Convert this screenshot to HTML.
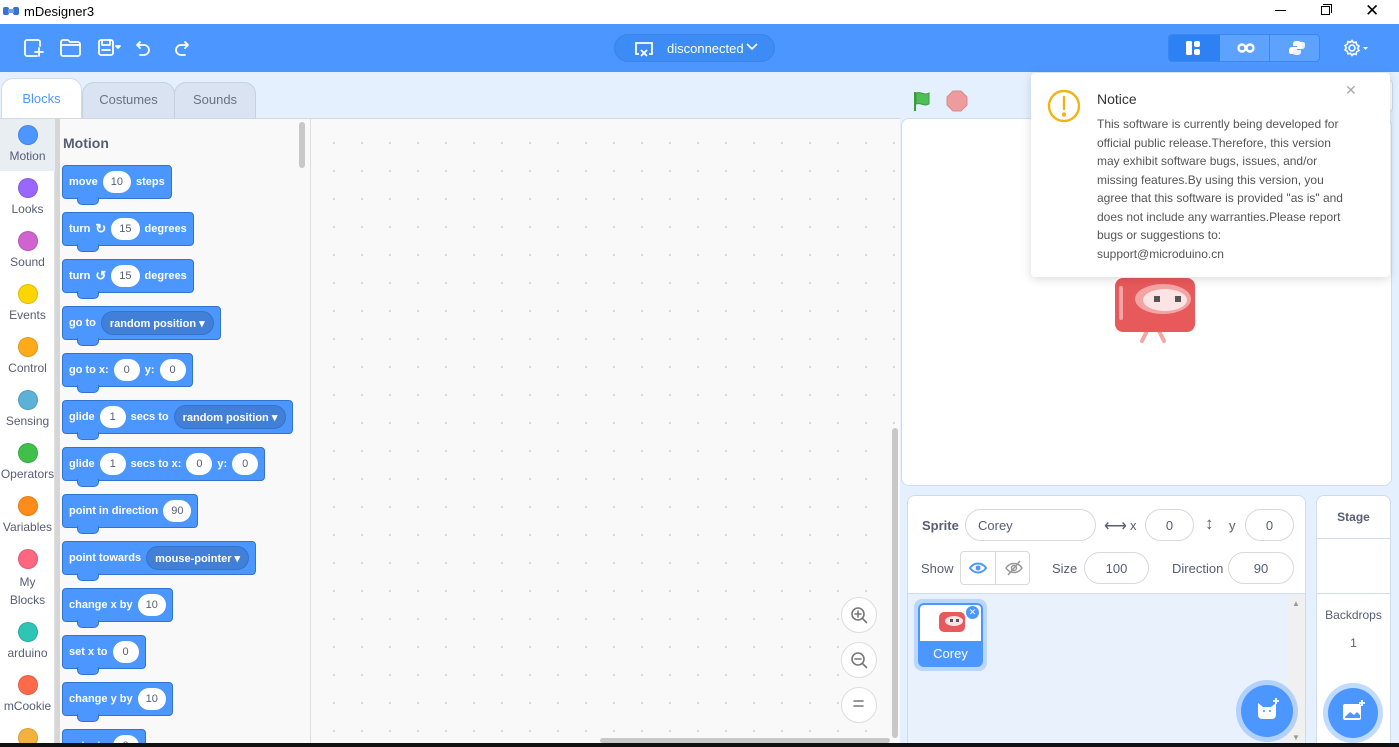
<!DOCTYPE html>
<html><head><meta charset="utf-8"><style>
*{box-sizing:border-box;margin:0;padding:0}
html{width:1399px;height:747px;overflow:hidden}
body{width:1399px;height:747px;overflow:hidden;background:#e5f0ff;font-family:"Liberation Sans",Arial,sans-serif;position:relative}
.a{position:absolute}
.blk{position:absolute;left:62px;height:34px;background:#4c97ff;border:1px solid #3373cc;border-radius:4px;color:#fff;font-size:11px;font-weight:bold;display:flex;align-items:center;padding:0 6px;gap:5px;white-space:nowrap}
.blk:after{content:"";position:absolute;left:14px;bottom:-7px;width:20px;height:7px;background:#4c97ff;border:1px solid #3373cc;border-top:none;border-radius:0 0 5px 5px}
.in{background:#fff;color:#575e75;border-radius:12px;height:22px;min-width:26px;padding:0 8px;display:inline-flex;align-items:center;justify-content:center;font-weight:normal}
.dd{background:#4280d7;border:1px solid #3373cc;border-radius:12px;height:24px;padding:0 8px;display:inline-flex;align-items:center;font-size:11px}
.cat{position:absolute;left:0;width:55px;text-align:center;font-size:12px;color:#575e75}
.cat i{display:block;width:20px;height:20px;border-radius:50%;margin:0 auto 4px;border:1px solid rgba(0,0,0,.12)}
.fld{position:absolute;height:32px;border:1px solid #d9d9d9;border-radius:16px;background:#fff;font-size:13px;color:#575e75;display:flex;align-items:center;justify-content:center}
.lbl{position:absolute;font-size:13px;color:#575e75}
</style></head><body>
<div class="a" style="left:0;top:0;width:1399px;height:24px;background:#fff"></div>
<svg class="a" style="left:3px;top:5px" width="16" height="12"><rect x="0" y="2" width="6" height="8" rx="2" fill="#3b6fd4"/><rect x="10" y="2" width="6" height="8" rx="2" fill="#3b6fd4"/><rect x="5" y="4" width="6" height="4" fill="#6a9ef0"/></svg>
<div class="a" style="left:24px;top:4px;font-size:13px;color:#000">mDesigner3</div>
<div class="a" style="left:1275px;top:10px;width:11px;height:1px;background:#000"></div>
<div class="a" style="left:1321px;top:6px;width:9px;height:9px;border:1px solid #000"></div>
<div class="a" style="left:1323px;top:4px;width:9px;height:9px;border-top:1px solid #000;border-right:1px solid #000"></div>
<div class="a" style="left:1365px;top:1px;font-size:17px;color:#000">✕</div>
<div class="a" style="left:0;top:24px;width:1399px;height:48px;background:#4c97ff"></div>
<svg class="a" style="left:22px;top:36px" width="180" height="24" fill="none" stroke="#fff" stroke-width="1.8" stroke-linecap="round" stroke-linejoin="round">
<path d="M16 4H5a2 2 0 0 0-2 2v12a2 2 0 0 0 2 2h10"/><path d="M17 12v8M13 16h8"/><path d="M16 4a2 2 0 0 1 2 2v4"/>
<path d="M39 6a2 2 0 0 1 2-2h5l2 2h8a2 2 0 0 1 2 2v10a2 2 0 0 1-2 2H41a2 2 0 0 1-2-2z"/><path d="M39 9h19"/>
<rect x="77" y="4" width="14" height="15" rx="2"/><path d="M80 4v5h8V4M80 14h8"/>
<path d="M94 10l2 2 2-2z" fill="#fff"/>
<path d="M118 6l-3 3 3 3M115 9h7a5 5 0 0 1 0 10h-4"/>
<path d="M163 6l3 3-3 3M166 9h-7a5 5 0 0 0 0 10h4"/>
</svg>
<div class="a" style="left:614px;top:34px;width:161px;height:28px;border-radius:14px;background:#3d8cf5;border:1px solid #3a84ea"></div>
<svg class="a" style="left:634px;top:40px" width="20" height="18" fill="none" stroke="#fff" stroke-width="1.8"><path d="M5 14H2V3h16v11h-3"/><path d="M7 10l6 6M13 10l-6 6"/></svg>
<div class="a" style="left:667px;top:41px;font-size:13px;color:#fff">disconnected</div>
<svg class="a" style="left:746px;top:43px" width="12" height="8" fill="none" stroke="#fff" stroke-width="1.6"><path d="M1 1l5 5 5-5"/></svg>
<div class="a" style="left:1168px;top:34px;width:152px;height:28px;border-radius:4px;background:#5ea2ff;border:1px solid #3b86f0;overflow:hidden">
<div class="a" style="left:0;top:0;width:51px;height:28px;background:#2e81f2"></div>
<div class="a" style="left:100px;top:0;width:1px;height:28px;background:#3b86f0"></div></div>
<svg class="a" style="left:1186px;top:41px" width="14" height="14" fill="#fff"><rect x="0" y="0" width="6" height="14" rx="1.5"/><rect x="8" y="0" width="6" height="6" rx="2"/><rect x="8" y="8" width="6" height="6" rx="2"/></svg>
<svg class="a" style="left:1237px;top:43px" width="18" height="10" fill="none" stroke="#fff" stroke-width="2.4"><circle cx="5" cy="5" r="3.5"/><circle cx="13" cy="5" r="3.5"/></svg>
<svg class="a" style="left:1289px;top:40px" width="16" height="16" fill="#fff"><path d="M8 1c-3 0-4 1-4 3v2h4v1H3c-2 0-3 1-3 4s1 3 3 3h1v-2c0-2 1-3 3-3h4c1 0 2-1 2-2V4c0-2-2-3-5-3z"/><path d="M8 15c3 0 4-1 4-3v-2H8V9h5c2 0 3-1 3-4s-1-3-3-3h-1v2c0 2-1 3-3 3H5c-1 0-2 1-2 2v3c0 2 2 3 5 3z" opacity=".85"/></svg>
<svg class="a" style="left:1343px;top:39px" width="30" height="18" fill="none" stroke="#fff" stroke-width="1.6"><circle cx="9" cy="9" r="3"/><path d="M9 1.5l1.5 2.2 2.6-.6.6 2.6 2.3 1.3-1.3 2.3 1.3 2.2-2.3 1.3-.6 2.6-2.6-.6L9 16.5l-1.5-2.2-2.6.6-.6-2.6L2 11l1.3-2.2L2 6.5 4.3 5.2l.6-2.6 2.6.6z"/><path d="M20 8h5l-2.5 3z" fill="#fff" stroke="none"/></svg>
<div class="a" style="left:82px;top:82px;width:93px;height:36px;background:#d9e3f2;border:1px solid #c5d0e1;border-bottom:none;border-radius:12px 12px 0 0;font-size:13px;color:#6b7280;text-align:center;line-height:34px">Costumes</div>
<div class="a" style="left:174px;top:82px;width:82px;height:36px;background:#d9e3f2;border:1px solid #c5d0e1;border-bottom:none;border-radius:12px 12px 0 0;font-size:13px;color:#6b7280;text-align:center;line-height:34px">Sounds</div>
<div class="a" style="left:1px;top:78px;width:81px;height:41px;background:#fff;border:1px solid #d0dcec;border-bottom:none;border-radius:12px 12px 0 0;font-size:13px;color:#4c97ff;text-align:center;line-height:40px">Blocks</div>
<div class="a" style="left:0;top:118px;width:900px;height:629px;background:#f9f9f9;border-top:1px solid #d0d8e6;background-image:radial-gradient(#d8d8d8 1px,transparent 1.2px);background-size:28px 28px;background-position:320px 10px"></div>
<div class="a" style="left:0;top:119px;width:311px;height:628px;background:#f9f9f9;border-right:1px solid #ddd"></div>
<div class="a" style="left:0;top:119px;width:55px;height:628px;background:#fff;border-right:1px solid #e0e0e0"></div>
<div class="a" style="left:0;top:119px;width:55px;height:52px;background:#e9eef2"></div>
<div class="a" style="left:55px;top:119px;width:5px;height:628px;background:#d6d6d6"></div>
<div class="a" style="left:299px;top:122px;width:6px;height:46px;background:#c8c8c8;border-radius:3px"></div>
<div class="cat" style="top:125px"><i style="background:#4c97ff"></i>Motion</div>
<div class="cat" style="top:178px"><i style="background:#9966ff"></i>Looks</div>
<div class="cat" style="top:231px"><i style="background:#cf63cf"></i>Sound</div>
<div class="cat" style="top:284px"><i style="background:#ffd500"></i>Events</div>
<div class="cat" style="top:337px"><i style="background:#ffab19"></i>Control</div>
<div class="cat" style="top:390px"><i style="background:#5cb1d6"></i>Sensing</div>
<div class="cat" style="top:443px"><i style="background:#40bf4a"></i>Operators</div>
<div class="cat" style="top:496px"><i style="background:#ff8c1a"></i>Variables</div>
<div class="cat" style="top:549px;line-height:18px"><i style="background:#ff6680"></i>My<br>Blocks</div>
<div class="cat" style="top:622px"><i style="background:#2ec4b6"></i>arduino</div>
<div class="cat" style="top:675px"><i style="background:#ff6b4a"></i>mCookie</div>
<div class="cat" style="top:728px"><i style="background:#f4b23c"></i></div>
<div class="a" style="left:63px;top:135px;font-size:14px;font-weight:bold;color:#575e75">Motion</div>
<div class="blk" style="top:165px">move <span class="in">10</span> steps</div>
<div class="blk" style="top:212px">turn <span style="font-size:13px">↻</span> <span class="in">15</span> degrees</div>
<div class="blk" style="top:259px">turn <span style="font-size:13px">↺</span> <span class="in">15</span> degrees</div>
<div class="blk" style="top:306px">go to <span class="dd">random position ▾</span></div>
<div class="blk" style="top:353px">go to x: <span class="in">0</span> y: <span class="in">0</span></div>
<div class="blk" style="top:400px">glide <span class="in">1</span> secs to <span class="dd">random position ▾</span></div>
<div class="blk" style="top:447px">glide <span class="in">1</span> secs to x: <span class="in">0</span> y: <span class="in">0</span></div>
<div class="blk" style="top:494px">point in direction <span class="in">90</span></div>
<div class="blk" style="top:541px">point towards <span class="dd">mouse-pointer ▾</span></div>
<div class="blk" style="top:588px">change x by <span class="in">10</span></div>
<div class="blk" style="top:635px">set x to <span class="in">0</span></div>
<div class="blk" style="top:682px">change y by <span class="in">10</span></div>
<div class="blk" style="top:729px">set y to <span class="in">0</span></div>
<div class="a" style="left:892px;top:428px;width:6px;height:310px;background:#c8c8c8;border-radius:3px"></div>
<div class="a" style="left:600px;top:738px;width:290px;height:5px;background:#c8c8c8;border-radius:3px"></div>
<div class="a" style="left:841px;top:597px;width:36px;height:36px;border-radius:50%;border:1px solid #ddd;background:#fff"></div>
<div class="a" style="left:841px;top:642px;width:36px;height:36px;border-radius:50%;border:1px solid #ddd;background:#fff"></div>
<div class="a" style="left:841px;top:687px;width:36px;height:36px;border-radius:50%;border:1px solid #ddd;background:#fff"></div>
<svg class="a" style="left:849px;top:605px" width="20" height="110" fill="none" stroke="#777" stroke-width="1.6" stroke-linecap="round"><circle cx="9" cy="9" r="6"/><path d="M13.5 13.5l4 4M6 9h6M9 6v6"/><circle cx="9" cy="54" r="6"/><path d="M13.5 58.5l4 4M6 54h6"/><path d="M5 96h9M5 101h9"/></svg>
<svg class="a" style="left:912px;top:90px" width="26" height="22"><path d="M3 2v19" stroke="#3a9b3a" stroke-width="2"/><path d="M4 3c5-2 8 3 13 0v11c-5 3-8-2-13 0z" fill="#4cbf56" stroke="#3a9b3a"/></svg>
<svg class="a" style="left:946px;top:90px" width="22" height="22"><path d="M7 1h8l6 6v8l-6 6H7l-6-6V7z" fill="#ec9c9c" stroke="#d88"/></svg>
<div class="a" style="left:901px;top:118px;width:491px;height:368px;background:#fff;border:1px solid #d0dcec;border-radius:8px"></div>
<div class="a" style="left:1365px;top:80px;width:28px;height:32px;background:#fff;border:1px solid #d0dcec;border-radius:4px"></div>
<svg class="a" style="left:1112px;top:275px" width="86" height="74"><path d="M38 50l-8 16M44 50l8 16" stroke="#f6a4a4" stroke-width="4" stroke-linecap="round"/><rect x="3" y="3" width="80" height="54" rx="8" fill="#e8595b"/><ellipse cx="51" cy="24" rx="28" ry="15" fill="#f3a5a5"/><ellipse cx="53" cy="25" rx="22" ry="11" fill="#fde4e4"/><rect x="42" y="21" width="6" height="6" fill="#555"/><rect x="63" y="21" width="6" height="6" fill="#555"/><path d="M9 13v30" stroke="#f3a5a5" stroke-width="4" stroke-linecap="round"/></svg>
<div class="a" style="left:1031px;top:73px;width:359px;height:204px;background:#fff;border-radius:4px;box-shadow:0 2px 10px rgba(0,0,0,.15)"></div>
<svg class="a" style="left:1046px;top:88px" width="36" height="36" fill="none" stroke="#f0b418" stroke-width="2.4"><circle cx="18" cy="18" r="15"/><path d="M18 9v12" stroke-linecap="round"/><circle cx="18" cy="26.5" r="1" fill="#f0b418"/></svg>
<div class="a" style="left:1097px;top:91px;font-size:14px;color:#333">Notice</div>
<div class="a" style="left:1345px;top:82px;font-size:14px;color:#aaa">✕</div>
<div class="a" style="left:1097px;top:115px;width:252px;font-size:12px;line-height:18.5px;color:#555">This software is currently being developed for official public release.Therefore, this version may exhibit software bugs, issues, and/or missing features.By using this version, you agree that this software is provided "as is" and does not include any warranties.Please report bugs or suggestions to: support@microduino.cn</div>
<div class="a" style="left:907px;top:495px;width:399px;height:252px;background:#e9f1fc;border:1px solid #d0dcec;border-radius:8px 8px 0 0;overflow:hidden">
<div class="a" style="left:0;top:0;width:399px;height:98px;background:#fff;border-bottom:1px solid #d0dcec"></div>
<div class="a" style="left:380px;top:100px;width:18px;height:152px;background:#f0f0f0"></div></div>
<div class="lbl" style="left:922px;top:518px;font-weight:bold">Sprite</div>
<div class="fld" style="left:965px;top:509px;width:131px;justify-content:flex-start;padding-left:12px">Corey</div>
<div class="lbl" style="left:1104px;top:516px;font-size:16px">⟷</div>
<div class="lbl" style="left:1130px;top:518px">x</div>
<div class="fld" style="left:1145px;top:509px;width:49px">0</div>
<div class="lbl" style="left:1205px;top:514px;font-size:17px;font-weight:bold">↕</div>
<div class="lbl" style="left:1229px;top:518px">y</div>
<div class="fld" style="left:1245px;top:509px;width:49px">0</div>
<div class="lbl" style="left:921px;top:561px">Show</div>
<div class="a" style="left:960px;top:551px;width:70px;height:34px;border:1px solid #d9d9d9;border-radius:4px;background:#fff"><div class="a" style="left:34px;top:0;width:1px;height:32px;background:#d9d9d9"></div></div>
<svg class="a" style="left:969px;top:560px" width="54" height="16" fill="none" stroke-width="2"><path d="M1 8c4-6 12-6 16 0c-4 6-12 6-16 0z" stroke="#4c97ff"/><circle cx="9" cy="8" r="2.5" fill="#4c97ff" stroke="none"/><g stroke="#999" stroke-width="1.5"><path d="M37 8c4-6 12-6 16 0c-4 6-12 6-16 0z"/><circle cx="45" cy="8" r="2.5"/><path d="M39 15l12-14"/></g></svg>
<div class="lbl" style="left:1052px;top:561px">Size</div>
<div class="fld" style="left:1084px;top:552px;width:65px">100</div>
<div class="lbl" style="left:1172px;top:561px">Direction</div>
<div class="fld" style="left:1228px;top:552px;width:66px">90</div>
<div class="a" style="left:914px;top:599px;width:73px;height:72px;border-radius:8px;background:#bcd7fc"></div>
<div class="a" style="left:918px;top:603px;width:65px;height:64px;border-radius:6px;background:#4c97ff;border:2px solid #4c97ff;overflow:hidden"><div style="height:36px;background:#fff"></div><div style="color:#fff;font-size:13px;text-align:center;margin-top:5px">Corey</div></div>
<svg class="a" style="left:937px;top:608px" width="30" height="28"><rect x="2" y="4" width="26" height="20" rx="5" fill="#e8595b"/><ellipse cx="17" cy="13" rx="9" ry="5" fill="#fde4e4"/><rect x="13" y="11" width="3" height="3" fill="#555"/><rect x="19" y="11" width="3" height="3" fill="#555"/></svg>
<div class="a" style="left:965px;top:605px;width:15px;height:15px;border-radius:50%;background:#4c97ff;border:1.5px solid #fff;color:#fff;font-size:9px;text-align:center;line-height:12px">✕</div>
<div class="a" style="left:1292px;top:599px;font-size:8px;color:#999">▲</div>
<div class="a" style="left:1292px;top:733px;font-size:8px;color:#999">▼</div>
<div class="a" style="left:1241px;top:685px;width:52px;height:52px;border-radius:50%;background:#4c97ff;box-shadow:0 0 0 5px rgba(76,151,255,.35)"></div>
<svg class="a" style="left:1255px;top:697px" width="26" height="26" fill="#fff"><path d="M3 6l5 4h8l5-4v12a4 4 0 0 1-4 4H7a4 4 0 0 1-4-4z"/><path d="M21 1v6M18 4h6" stroke="#fff" stroke-width="1.8"/><circle cx="9" cy="14" r="1" fill="#4c97ff"/><circle cx="15" cy="14" r="1" fill="#4c97ff"/></svg>
<div class="a" style="left:1316px;top:495px;width:75px;height:252px;background:#fff;border:1px solid #d0dcec;border-radius:8px 8px 0 0;overflow:hidden"><div class="a" style="left:0;top:42px;width:75px;height:56px;border-top:1px solid #d0dcec;border-bottom:1px solid #d0dcec"></div></div>
<div class="a" style="left:1316px;top:510px;width:75px;text-align:center;font-size:12px;font-weight:bold;color:#575e75">Stage</div>
<div class="a" style="left:1316px;top:608px;width:75px;text-align:center;font-size:12px;color:#575e75">Backdrops</div>
<div class="a" style="left:1316px;top:636px;width:75px;text-align:center;font-size:12px;color:#575e75">1</div>
<div class="a" style="left:1328px;top:688px;width:50px;height:50px;border-radius:50%;background:#4c97ff;box-shadow:0 0 0 5px rgba(76,151,255,.35)"></div>
<svg class="a" style="left:1341px;top:699px" width="26" height="26"><rect x="2" y="5" width="18" height="16" rx="2" fill="#fff"/><path d="M4 18l5-5 4 3 3-3 3 3v3H4z" fill="#4c97ff"/><path d="M21 1v6M18 4h6" stroke="#fff" stroke-width="1.8"/></svg>
<div class="a" style="left:0;top:743px;width:1399px;height:4px;background:#111"></div>
</body></html>
